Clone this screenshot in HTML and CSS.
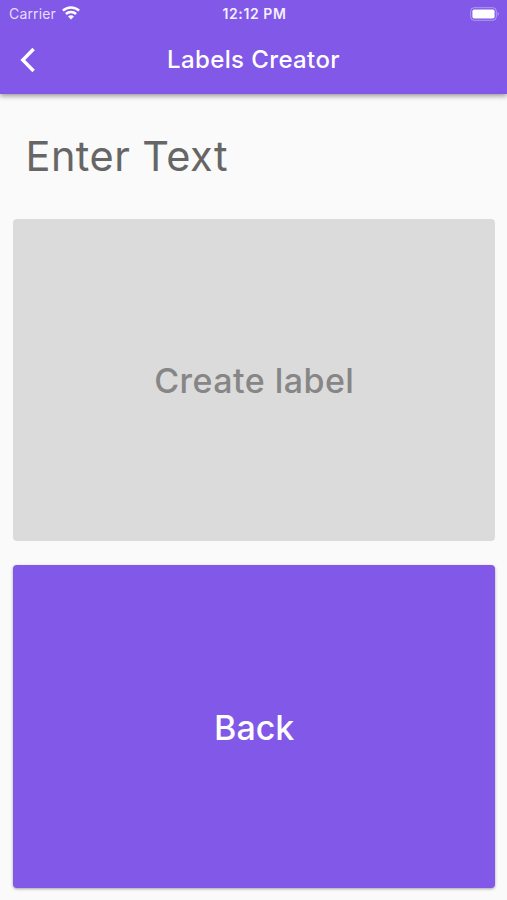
FILE: index.html
```html
<!DOCTYPE html>
<html lang="en">
<head>
    <meta charset="UTF-8">
    <meta name="viewport" content="width=device-width, initial-scale=1.0">
    <title>Labels Creator</title>
    <link rel="stylesheet" href="styles.css">
</head>
<body>

    <header class="header">
        <div class="status-bar">
            <div class="carrier">
                <span>Carrier</span>
                <svg class="wifi" viewBox="0 0 18 14" width="18" height="14">
                    <path d="M0.9 4.7a11.8 11.8 0 0 1 16.2 0" />
                    <path d="M3.9 8a7.4 7.4 0 0 1 10.2 0" />
                    <path class="dot" d="M9 13.5 6 10.6a4.3 4.3 0 0 1 6 0z" />
                </svg>
            </div>
            <div class="time">12:12 PM</div>
            <div class="battery-box">
                <svg width="30" height="14" viewBox="0 0 30 14">
                    <rect x="0.7" y="0.7" width="25.6" height="12.6" rx="3.5" fill="none" stroke="#fff" stroke-opacity="0.4" />
                    <rect x="2.4" y="2.4" width="22.2" height="9.2" rx="1.8" fill="#fff" />
                    <path d="M27.7 5q2 2 0 4z" fill="#fff" fill-opacity="0.5" />
                </svg>
            </div>
        </div>
        <div class="nav-bar">
            <button class="back-icon" aria-label="Back">
                <svg width="16" height="26" viewBox="0 0 16 26">
                    <path d="M13.6 2 2.8 13l10.8 11" fill="none" stroke="#fff" stroke-width="3.4" />
                </svg>
            </button>
            <h1>Labels Creator</h1>
        </div>
    </header>

    <main class="container">
        <input class="text-field" type="text" placeholder="Enter Text">
        <button class="btn" disabled>Create label</button>
        <button class="btn btn-primary">Back</button>
    </main>

</body>
</html>
```
FILE: styles.css
```css
* {
    box-sizing: border-box;
}

body {
    font-family: Inter, 'Liberation Sans', sans-serif;
    margin: 0;
    height: 900px;
    background-color: #fafafa;
    overflow: hidden;
}

button {
    font-family: inherit;
    border: none;
    padding: 0;
}

.header {
    height: 94px;
    background-color: #8158e7;
    color: #fff;
    box-shadow: 0 2px 5px rgba(0, 0, 0, 0.4);
}

.status-bar {
    display: grid;
    grid-template-columns: 1fr auto 1fr;
    align-items: center;
    height: 27px;
    padding: 0 7px 0 9px;
    font-size: 14px;
}

.carrier {
    display: flex;
    align-items: center;
    gap: 6px;
    color: #e6defa;
    letter-spacing: 0.15px;
}

.wifi {
    fill: none;
    stroke: #fff;
    stroke-width: 2.5;
    margin-top: -2px;
}

.wifi .dot {
    fill: #fff;
    stroke: none;
}

.time {
    color: #f3effd;
    font-weight: 600;
    font-size: 14px;
    letter-spacing: 0.6px;
}

.battery-box {
    display: flex;
    justify-content: flex-end;
}

.nav-bar {
    display: grid;
    grid-template-columns: 56px 1fr 56px;
    align-items: center;
    height: 66px;
}

.back-icon {
    display: flex;
    justify-content: center;
    background: none;
}

h1 {
    margin: 0;
    padding-bottom: 1px;
    text-align: center;
    font-size: 24px;
    font-weight: 500;
    letter-spacing: 0.38px;
}

.container {
    display: flex;
    flex-direction: column;
    padding: 0 12.5px 0 13px;
}

.text-field {
    height: 124.5px;
    padding: 0 12.5px;
    border: none;
    outline: none;
    background: none;
    font-family: inherit;
    font-size: 41.5px;
    letter-spacing: 0.45px;
}

.text-field::placeholder {
    color: #666;
    opacity: 1;
}

.btn {
    height: 322.5px;
    padding: 2px 0 0 1px;
    border-radius: 4px;
    background-color: #dbdbdb;
    color: #868686;
    font-size: 34px;
    font-weight: 450;
    letter-spacing: 0.45px;
}

.btn-primary {
    margin-top: 24px;
    background-color: #8158e7;
    color: #fff;
    font-weight: 500;
    letter-spacing: 0;
    box-shadow: 0 1px 3px rgba(0, 0, 0, 0.35);
}
```
